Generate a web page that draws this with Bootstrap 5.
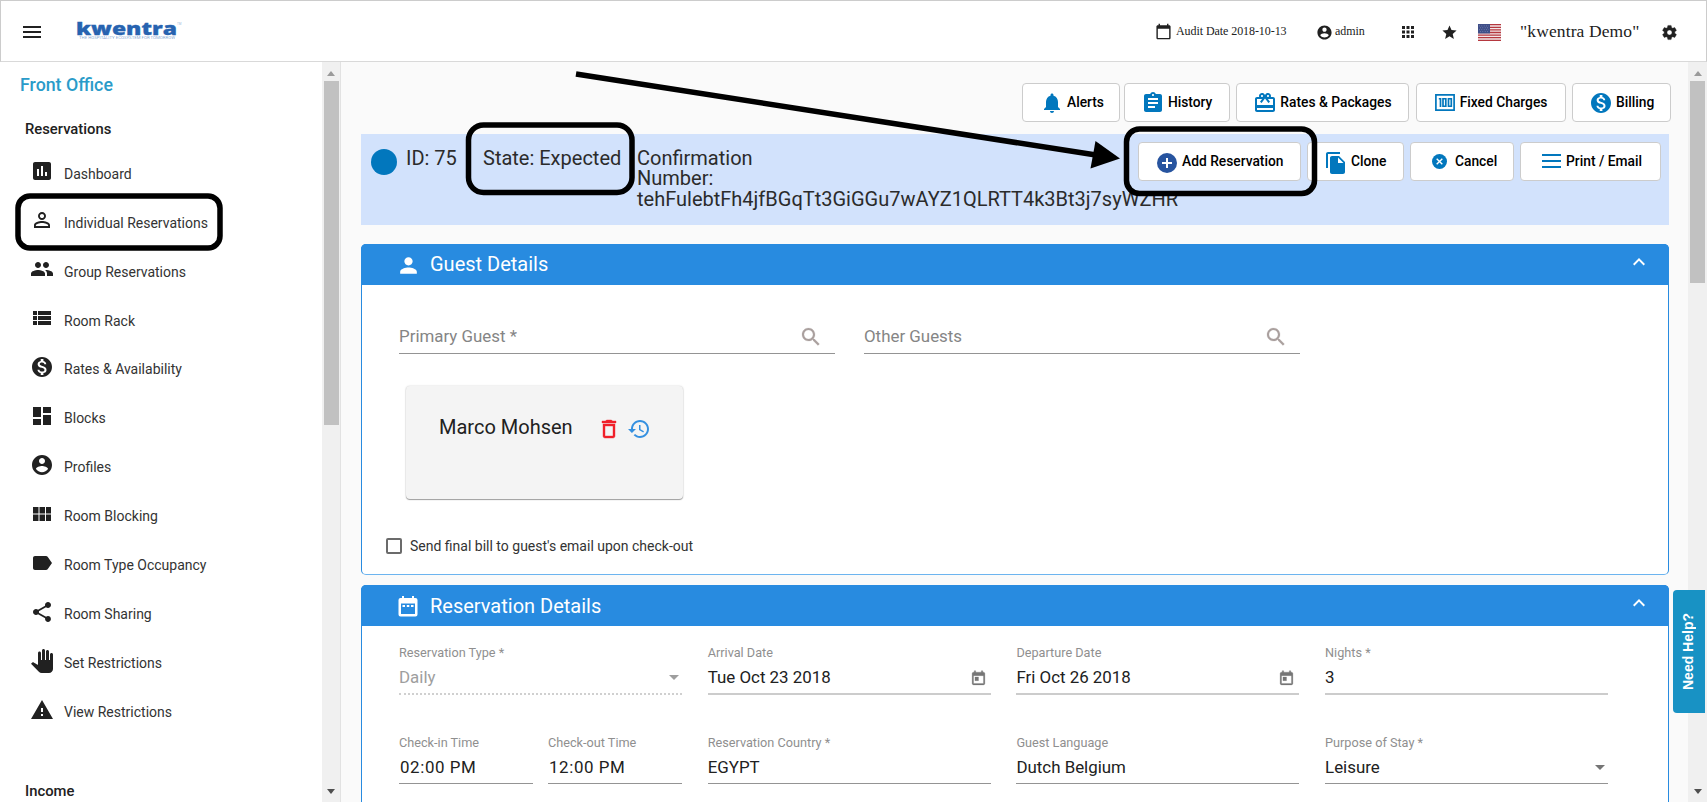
<!DOCTYPE html>
<html lang="en">
<head>
<meta charset="utf-8">
<title>kwentra</title>
<link href="https://cdn.jsdelivr.net/npm/bootstrap@5.3.0/dist/css/bootstrap.min.css" rel="stylesheet">
<script src="https://cdn.jsdelivr.net/npm/bootstrap@5.3.0/dist/js/bootstrap.bundle.min.js"></script>
<style>
body{width:1707px;height:802px;overflow:hidden;font-family:Roboto,sans-serif;color:#212121;background:#fff;line-height:1.25}
svg{display:block;flex:none;fill:currentColor}
span,h2,h3{white-space:nowrap}
.ic24{width:24px;height:24px}
.topbar{height:62px;border:1px solid #ccc;border-bottom:1px solid #d9d9d9;font-family:"Liberation Serif",serif;padding-left:19px}
.topbar .audit{font-size:12px;letter-spacing:-.07px}
.topbar .hotel{font-size:17.500px;letter-spacing:.12px}
.logo{color:#2763b0;margin-left:30px;margin-top:-4px}
.shell{height:740px}
.side{width:322px;padding-top:12px}
.side h2{font-size:17.800px;font-weight:500;color:#2a9bc9;margin:0;padding-left:20px;height:22px;line-height:22px}
.side h3{font-size:14.800px;font-weight:500;margin:0;padding-left:25px;height:20px;line-height:21px}
.side .entry{height:48.950px;padding-left:30px;font-size:14px;color:#333}
.side .entry svg{color:#212121;margin-right:10px;margin-top:-6px}
.rail{width:19px;background:#f0f0f0;padding:9px 0 8px}
.rail.inner{border-right:1px solid #e2e2e2}
.rail i{width:0;height:0;border:4px solid transparent}
.rail .up{border-top:0;border-bottom:5px solid #9a9a9a}
.rail .down{border-bottom:0;border-top:5px solid #4f4f4f}
.rail b{width:15px;background:#c1c1c1;margin-top:5px}
.page{background:#fafafa;width:1347px;padding:21px 17px 0 20px}
.tool{height:39px;border:1px solid #ccc;border-radius:4px;background:#fff;color:#000;font-size:13.800px;font-weight:500;padding:0}
.tool svg{color:#0277bd}
.statebar{height:91px;background:#d2e2fc;margin-top:12px;width:1308px;font-size:20px;line-height:20px;color:#2b2b2b;padding-left:10px}
.statebar .idno{width:77px;margin-left:9px}
.statebar>span,.statebar>.confirm{margin-top:14px}
.dot{width:26px;height:26px;background:#0277bd;margin-top:15px}
.panelx{width:1308px;border:1px solid #288be0;border-color:#288be0 #288be0 #6cb4ef;border-radius:5px;background:#fff}
.phead{height:41px;background:#288be0;color:#fff;padding:0 18px 0 36px;margin:-1px -1px 0;border-radius:5px 5px 0 0;font-size:20px}
.f{border-bottom:1px solid #949494;color:#212121;font-size:16.900px}
.f small{display:block;font-size:12.700px;color:#8f8f8f;line-height:16px;height:16px}
.f .v{height:32px;padding-top:1px;line-height:31px}
.f .v svg{color:#757575}
.f .clock{letter-spacing:.6px;padding-left:1px}
.fields{padding-left:37px;gap:25.700px}
.gcard{width:277px;height:113px;background:#f4f4f4;border-radius:4px;box-shadow:0 1px 1px rgba(0,0,0,.35),0 0 2px rgba(0,0,0,.2);font-size:20px}
.box{width:16px;height:16px;border:2px solid #6b6b6b;border-radius:2px}
.help{left:1673px;top:590px;width:32px;height:123px;background:#1892c4;border-radius:4px 0 0 4px;color:#fff;font:bold 14px "Liberation Sans",sans-serif;padding-right:2px}
.help span{writing-mode:vertical-rl;transform:rotate(180deg)}
</style>
</head>
<body class="position-relative">
<svg width="0" height="0" class="position-absolute"><defs>
<symbol id="money" viewBox="0 0 24 24"><path d="M12 2C6.48 2 2 6.48 2 12s4.48 10 10 10 10-4.480 10-10S17.520 2 12 2zm1.410 16.090V20h-2.670v-1.930c-1.710-.36-3.160-1.460-3.270-3.400h1.960c.1 1.050.82 1.870 2.650 1.870 1.960 0 2.400-.98 2.400-1.590 0-.83-.44-1.610-2.670-2.140-2.480-.6-4.180-1.620-4.180-3.670 0-1.720 1.390-2.840 3.110-3.210V4h2.670v1.950c1.860.45 2.790 1.860 2.850 3.390H14.300c-.05-1.110-.64-1.870-2.220-1.870-1.500 0-2.400.68-2.400 1.640 0 .84.65 1.390 2.670 1.910s4.180 1.390 4.180 3.910c-.01 1.830-1.380 2.830-3.120 3.160z"/></symbol>
<symbol id="acct" viewBox="0 0 24 24"><path d="M12 2C6.480 2 2 6.480 2 12s4.480 10 10 10 10-4.480 10-10S17.520 2 12 2zm0 3c1.660 0 3 1.340 3 3s-1.340 3-3 3-3-1.340-3-3 1.340-3 3-3zm0 14.200c-2.500 0-4.710-1.280-6-3.220.03-1.990 4-3.080 6-3.080 1.990 0 5.970 1.090 6 3.080-1.290 1.940-3.500 3.220-6 3.220z"/></symbol>
<symbol id="find" viewBox="0 0 24 24"><path d="M15.500 14h-.79l-.28-.27C15.410 12.590 16 11.110 16 9.500 16 5.910 13.090 3 9.500 3S3 5.910 3 9.500 5.910 16 9.500 16c1.610 0 3.090-.59 4.230-1.570l.27.28v.79l5 4.990L20.490 19l-4.990-5zm-6 0C7.010 14 5 11.990 5 9.500S7.010 5 9.500 5 14 7.010 14 9.500 11.990 14 9.500 14z" stroke="currentColor" stroke-width=".2"/></symbol>
<symbol id="today" viewBox="0 0 24 24"><path d="M19 3h-1V1h-2v2H8V1H6v2H5c-1.110 0-1.990.9-1.990 2L3 19c0 1.100.89 2 2 2h14c1.100 0 2-.9 2-2V5c0-1.100-.9-2-2-2zm0 16H5V8h14v11zM7 10h5v5H7z" stroke="currentColor" stroke-width=".4"/></symbol>
<symbol id="drop" viewBox="0 0 10 5"><path d="M0 0h10L5 5z"/></symbol>
<symbol id="chev" viewBox="0 0 24 24"><path d="M12 8l-6 6 1.410 1.410L12 10.830l4.590 4.580L18 14z"/></symbol>
</defs></svg>

<header class="topbar d-flex align-items-center">
<svg class="ic24" viewBox="0 0 24 24" style="margin-top:2px"><path d="M3 18h18v-2H3v2zm0-5h18v-2H3v2zm0-7v2h18V6H3z"/></svg>
<svg class="logo" width="108" height="30" viewBox="0 0 108 30"><text x="2" y="20.500" font-family="Open Sans,sans-serif" font-weight="800" font-size="17" textLength="101" lengthAdjust="spacingAndGlyphs" stroke="#2763b0" stroke-width=".3">kwentra</text><text x="103" y="10.500" font-family="Roboto" font-size="3" fill-opacity=".5">TM</text><text x="5" y="24.500" font-family="Roboto" font-size="3" textLength="96" lengthAdjust="spacingAndGlyphs" fill-opacity=".6">THE HOSPITALITY ECOSYSTEM FOR TOMORROW</text></svg>
<div class="d-flex align-items-center" style="margin-left:973px">
<svg width="17" height="17" viewBox="0 0 24 24"><path d="M20 3h-1V1h-2v2H7V1H5v2H4c-1.100 0-2 .9-2 2v16c0 1.100.9 2 2 2h16c1.100 0 2-.9 2-2V5c0-1.100-.9-2-2-2zm0 18H4V8h16v13z"/></svg>
<span class="audit" style="margin-left:4px;width:140px">Audit Date 2018-10-13</span>
<svg width="17" height="17" style="margin-top:2px"><use href="#acct"/></svg>
<span class="audit" style="margin-left:2px;width:64px">admin</span>
<svg width="18" height="18" viewBox="0 0 24 24" style="margin-top:2px"><path d="M4 8h4V4H4v4zm6 12h4v-4h-4v4zm-6 0h4v-4H4v4zm0-6h4v-4H4v4zm6 0h4v-4h-4v4zm6-10v4h4V4h-4zm-6 4h4V4h-4v4zm6 6h4v-4h-4v4zm0 6h4v-4h-4v4z"/></svg>
<svg width="17" height="17" viewBox="0 0 24 24" style="margin-left:24px;margin-top:2px"><path d="M12 17.270L18.180 21l-1.640-7.030L22 9.240l-7.190-.61L12 2 9.190 8.630 2 9.240l5.460 4.730L5.820 21z"/></svg>
<svg width="23" height="17" viewBox="0 0 23 18" preserveAspectRatio="none" style="margin-left:20px;margin-top:2px"><path fill="#f3e6e8" d="M0 0h23v18H0z"/><path stroke="#b5383f" stroke-width="1.400" d="M0 .7h23M0 3.500h23M0 6.300h23M0 9h23M0 11.700h23M0 14.500h23M0 17.300h23"/><path fill="#3f4f88" d="M0 0h12v10H0z"/><path stroke="#8f9ac4" stroke-width=".7" stroke-dasharray=".8 1.600" d="M1 2h10M2 4h9M1 6h10M2 8h9"/></svg>
<span class="hotel" style="margin-left:19px;width:141px;padding-top:1px">"kwentra Demo"</span>
<svg width="17" height="17" viewBox="0 0 24 24" style="margin-top:3px"><path d="M19.430 12.980c.04-.32.07-.64.07-.98s-.03-.66-.07-.98l2.110-1.650c.19-.15.240-.42.12-.64l-2-3.460c-.12-.22-.39-.3-.61-.22l-2.490 1c-.52-.4-1.080-.73-1.690-.98l-.38-2.650C14.460 2.180 14.250 2 14 2h-4c-.25 0-.46.18-.49.42l-.38 2.650c-.61.25-1.170.59-1.690.98l-2.490-1c-.23-.09-.49 0-.61.22l-2 3.460c-.13.22-.07.49.12.64l2.110 1.650c-.04.32-.07.65-.07.98s.03.66.07.98l-2.110 1.650c-.19.15-.240.42-.12.64l2 3.460c.12.22.39.3.61.22l2.490-1c.52.4 1.080.73 1.690.98l.38 2.650c.03.24.24.42.49.42h4c.25 0 .46-.18.49-.42l.38-2.650c.61-.25 1.170-.59 1.690-.98l2.490 1c.23.09.49 0 .61-.22l2-3.460c.12-.22.07-.49-.12-.64l-2.110-1.650zM12 15.500c-1.930 0-3.500-1.570-3.500-3.500s1.570-3.500 3.500-3.500 3.500 1.570 3.500 3.500-1.570 3.500-3.500 3.500z" stroke="currentColor" stroke-width=".5"/></svg>
</div>
</header>

<div class="shell d-flex">
<aside class="side overflow-hidden">
<h2><span>Front Office</span></h2>
<h3 style="margin-top:23px"><span>Reservations</span></h3>
<nav class="d-flex flex-column" style="margin-top:11px">
<div class="entry d-flex align-items-center"><svg class="ic24" viewBox="0 0 24 24"><path d="M19 3H5c-1.100 0-2 .9-2 2v14c0 1.100.9 2 2 2h14c1.100 0 2-.9 2-2V5c0-1.100-.9-2-2-2zM9 17H7v-7h2v7zm4 0h-2V7h2v10zm4 0h-2v-4h2v4z"/></svg><span>Dashboard</span></div>
<div class="entry d-flex align-items-center"><svg class="ic24" viewBox="0 0 24 24"><path d="M12 5.900c1.160 0 2.100.94 2.100 2.100s-.94 2.100-2.100 2.100S9.900 9.160 9.900 8s.94-2.100 2.100-2.100m0 9c2.970 0 6.100 1.460 6.100 2.100v1.100H5.900V17c0-.64 3.130-2.100 6.100-2.100M12 4C9.790 4 8 5.790 8 8s1.790 4 4 4 4-1.790 4-4-1.790-4-4-4zm0 9c-2.670 0-8 1.340-8 4v3h16v-3c0-2.660-5.330-4-8-4z"/></svg><span>Individual Reservations</span></div>
<div class="entry d-flex align-items-center"><svg class="ic24" viewBox="0 0 24 24"><path d="M16 11c1.660 0 2.990-1.340 2.990-3S17.660 5 16 5c-1.660 0-3 1.340-3 3s1.340 3 3 3zm-8 0c1.660 0 2.990-1.340 2.990-3S9.660 5 8 5C6.340 5 5 6.340 5 8s1.340 3 3 3zm0 2c-2.330 0-7 1.170-7 3.500V19h14v-2.500c0-2.330-4.670-3.500-7-3.500zm8 0c-.29 0-.62.02-.97.05 1.160.84 1.970 1.970 1.970 3.450V19h6v-2.500c0-2.330-4.670-3.500-7-3.500z"/></svg><span>Group Reservations</span></div>
<div class="entry d-flex align-items-center"><svg class="ic24" viewBox="0 0 24 24"><path d="M3 14h4v-4H3v4zm0 5h4v-4H3v4zM3 9h4V5H3v4zm5 5h13v-4H8v4zm0 5h13v-4H8v4zM8 5v4h13V5H8z"/></svg><span>Room Rack</span></div>
<div class="entry d-flex align-items-center"><svg class="ic24"><use href="#money"/></svg><span>Rates &amp; Availability</span></div>
<div class="entry d-flex align-items-center"><svg class="ic24" viewBox="0 0 24 24"><path d="M3 13h8V3H3v10zm0 8h8v-6H3v6zm10 0h8V11h-8v10zm0-18v6h8V3h-8z"/></svg><span>Blocks</span></div>
<div class="entry d-flex align-items-center"><svg class="ic24"><use href="#acct"/></svg><span>Profiles</span></div>
<div class="entry d-flex align-items-center"><svg class="ic24" viewBox="0 0 24 24"><path d="M3 11.500h5.500V5H3v6.500zM3 19h5.500v-6.500H3V19zm6.500 0H15v-6.500H9.500V19zm6.500 0h5v-6.500h-5V19zM9.500 11.500H15V5H9.500v6.500zM16 5v6.500h5V5h-5z"/></svg><span>Room Blocking</span></div>
<div class="entry d-flex align-items-center"><svg class="ic24" viewBox="0 0 24 24"><path d="M17.630 5.840C17.270 5.330 16.670 5 16 5L5 5.010C3.900 5.010 3 5.900 3 7v10c0 1.100.9 1.990 2 1.990L16 19c.67 0 1.270-.33 1.630-.84L22 12l-4.370-6.160z"/></svg><span>Room Type Occupancy</span></div>
<div class="entry d-flex align-items-center"><svg class="ic24" viewBox="0 0 24 24"><path d="M18 16.080c-.76 0-1.440.3-1.960.77L8.910 12.700c.05-.23.09-.46.09-.7s-.04-.47-.09-.7l7.050-4.110c.54.5 1.250.81 2.040.81 1.660 0 3-1.340 3-3s-1.340-3-3-3-3 1.340-3 3c0 .24.04.47.09.7L8.040 9.810C7.500 9.310 6.790 9 6 9c-1.660 0-3 1.340-3 3s1.340 3 3 3c.79 0 1.500-.31 2.040-.81l7.120 4.160c-.05.21-.08.43-.08.65 0 1.610 1.310 2.920 2.920 2.920s2.920-1.310 2.920-2.920-1.310-2.920-2.920-2.920z"/></svg><span>Room Sharing</span></div>
<div class="entry d-flex align-items-center"><svg class="ic24" viewBox="0 0 24 24"><path d="M23 5.500V20c0 2.200-1.800 4-4 4h-7.300c-1.080 0-2.100-.43-2.850-1.190L1 14.830s1.260-1.230 1.300-1.250c.22-.19.49-.29.79-.29.22 0 .42.06.6.16.04.01 4.310 2.460 4.310 2.460V4c0-.83.67-1.500 1.500-1.500S11 3.170 11 4v7h1V1.500c0-.83.67-1.500 1.500-1.500S15 .67 15 1.500V11h1V2.500c0-.83.67-1.500 1.500-1.500s1.500.67 1.500 1.500V11h1V5.500c0-.83.67-1.500 1.500-1.500s1.500.67 1.500 1.500z"/></svg><span>Set Restrictions</span></div>
<div class="entry d-flex align-items-center"><svg class="ic24" viewBox="0 0 24 24"><path d="M1 21h22L12 2 1 21zm12-3h-2v-2h2v2zm0-4h-2v-4h2v4z"/></svg><span>View Restrictions</span></div>
</nav>
<h3 style="margin-top:43.500px"><span>Income</span></h3>
</aside>
<div class="rail inner d-flex flex-column align-items-center"><i class="up"></i><b style="height:344px"></b><i class="down mt-auto"></i></div>

<main class="page overflow-hidden">
<div class="d-flex" style="margin-left:661px">
<button class="tool btn d-flex align-items-center" style="width:98px;padding-left:17px"><svg class="ic24" viewBox="0 0 24 24"><path d="M12 22c1.100 0 2-.9 2-2h-4c0 1.100.89 2 2 2zm6-6v-5c0-3.070-1.640-5.640-4.500-6.320V4c0-.83-.67-1.500-1.500-1.500s-1.500.67-1.500 1.500v.68C7.630 5.360 6 7.920 6 11v5l-2 2v1h16v-1l-2-2z"/></svg><span style="margin-left:3px">Alerts</span></button>
<button class="tool btn d-flex align-items-center" style="width:106px;margin-left:4px;padding-left:16px"><svg class="ic24" viewBox="0 0 24 24"><path d="M19 3h-4.180C14.400 1.840 13.300 1 12 1c-1.300 0-2.400.84-2.820 2H5c-1.100 0-2 .9-2 2v14c0 1.100.9 2 2 2h14c1.100 0 2-.9 2-2V5c0-1.100-.9-2-2-2zm-7 0c.55 0 1 .45 1 1s-.45 1-1 1-1-.45-1-1 .45-1 1-1zm2 14H7v-2h7v2zm3-4H7v-2h10v2zm0-4H7V7h10v2z"/></svg><span style="margin-left:3px">History</span></button>
<button class="tool btn d-flex align-items-center" style="width:173px;margin-left:6.500px;padding-left:16px"><svg class="ic24" viewBox="0 0 24 24"><path d="M20 6h-2.180c.11-.31.18-.65.18-1 0-1.660-1.340-3-3-3-1.050 0-1.960.54-2.500 1.350l-.5.670-.5-.68C10.960 2.540 10.050 2 9 2 7.340 2 6 3.340 6 5c0 .35.07.69.18 1H4c-1.110 0-1.990.89-1.990 2L2 19c0 1.110.89 2 2 2h16c1.110 0 2-.89 2-2V8c0-1.110-.89-2-2-2zm-5-2c.55 0 1 .45 1 1s-.45 1-1 1-1-.45-1-1 .45-1 1-1zM9 4c.55 0 1 .45 1 1s-.45 1-1 1-1-.45-1-1 .45-1 1-1zm11 15H4v-2h16v2zm0-5H4V8h5.080L7 10.830 8.620 12 11 8.760l1-1.360 1 1.360L15.380 12 17 10.830 14.920 8H20v6z"/></svg><span style="margin-left:3px">Rates &amp; Packages</span></button>
<button class="tool btn d-flex align-items-center" style="width:150px;margin-left:6.500px;padding-left:18px"><svg width="20" height="17" viewBox="0 0 20 18" preserveAspectRatio="none"><path fill="none" stroke="currentColor" stroke-width="1.700" d="M.9.9h18.200v16.200H.9zM3.800 5h1.700v8.800M8 5h2.800v8H8zM13.500 5h2.800v8h-2.800z"/></svg><span style="margin-left:5px">Fixed Charges</span></button>
<button class="tool btn d-flex align-items-center" style="width:99px;margin-left:6.500px;padding-left:16px"><svg class="ic24"><use href="#money"/></svg><span style="margin-left:3px">Billing</span></button>
</div>

<section class="statebar d-flex">
<div class="dot rounded-circle"></div>
<span class="idno">ID: 75</span>
<span style="width:154px">State: Expected</span>
<div class="confirm d-flex flex-column" style="width:501px;gap:.4px"><span>Confirmation</span><span>Number:</span><span>tehFulebtFh4jfBGqTt3GiGGu7wAYZ1QLRTT4k3Bt3j7syWZHR</span></div>
<div class="d-flex" style="margin-top:8px">
<button class="tool btn d-flex align-items-center" style="width:163px;padding-left:18px"><svg width="20" height="20" viewBox="0 0 20 20" style="margin-top:2px"><circle cx="10" cy="10" r="10" fill="#27549f"/><path d="M10 5v10M5 10h10" stroke="#fff" stroke-width="2"/></svg><span style="margin-left:5px">Add Reservation</span></button>
<button class="tool btn d-flex align-items-center" style="width:97px;margin-left:6px;padding-left:16px"><svg class="ic24" viewBox="0 0 24 24" style="margin-top:3px"><path d="M16 1H4c-1.100 0-2 .9-2 2v14h2V3h12V1zm-1 4l6 6v10c0 1.100-.9 2-2 2H7.990C6.890 23 6 22.100 6 21l.01-14c0-1.100.89-2 1.990-2h7zm-1 7h5.500L14 6.500V12z"/></svg><span style="margin-left:3px">Clone</span></button>
<button class="tool btn d-flex align-items-center" style="width:104px;margin-left:6px;padding-left:21px"><svg width="15" height="15" viewBox="0 0 16 16"><circle cx="8" cy="8" r="8"/><path d="M5 5l6 6M11 5l-6 6" stroke="#fff" stroke-width="1.500"/></svg><span style="margin-left:8px">Cancel</span></button>
<button class="tool btn d-flex align-items-center" style="width:141px;margin-left:6px;padding-left:21px"><svg width="19" height="14" viewBox="0 0 19 14" style="margin-top:-2px"><path d="M0 0h19v2H0zM0 6h19v2H0zM0 12h19v2H0z"/></svg><span style="margin-left:5px">Print / Email</span></button>
</div>
</section>

<section class="panelx" style="margin-top:19px;height:331px">
<div class="phead d-flex align-items-center"><svg width="25" height="25" viewBox="0 0 24 24" style="margin:1px 0 0 -1px"><path d="M12 12c2.210 0 4-1.790 4-4s-1.790-4-4-4-4 1.790-4 4 1.790 4 4 4zm0 2c-2.670 0-8 1.340-8 4v2h16v-2c0-2.660-5.330-4-8-4z"/></svg><span style="margin-left:9px">Guest Details</span><svg class="ms-auto" width="24" height="24" style="margin-top:-6px"><use href="#chev"/></svg></div>
<div class="d-flex" style="padding-left:37px;gap:29px;margin-top:36px">
<div class="f d-flex align-items-center" style="width:436px;height:33px;color:#858585;padding-right:12px"><span>Primary Guest *</span><svg class="ic24 ms-auto" style="color:#aaa09e"><use href="#find"/></svg></div>
<div class="f d-flex align-items-center" style="width:436px;height:33px;color:#858585;padding-right:12px"><span>Other Guests</span><svg class="ic24 ms-auto" style="color:#aaa09e"><use href="#find"/></svg></div>
</div>
<div class="gcard d-flex" style="margin:32px 0 0 44px;padding:29px 0 0 33px"><span style="width:158px">Marco Mohsen</span><svg width="24" height="24" viewBox="0 0 24 24" style="color:#f0202a;margin-top:2px"><path d="M6 19c0 1.100.9 2 2 2h8c1.100 0 2-.9 2-2V7H6v12zM8 9h8v10H8V9zm7.500-5l-1-1h-5l-1 1H5v2h14V4z" stroke="currentColor" stroke-width=".4"/></svg><svg width="24" height="24" viewBox="0 0 24 24" style="color:#3590e0;margin:2px 0 0 6px"><path d="M13 3c-4.970 0-9 4.030-9 9H1l3.890 3.890.07.14L9 12H6c0-3.870 3.130-7 7-7s7 3.130 7 7-3.130 7-7 7c-1.930 0-3.680-.79-4.940-2.060l-1.420 1.420C8.270 19.990 10.510 21 13 21c4.970 0 9-4.030 9-9s-4.030-9-9-9zm-1 5v5l4.280 2.540.72-1.210-3.500-2.080V8H12z"/></svg></div>
<div class="d-flex align-items-center" style="margin:38px 0 0 24px;font-size:14px;color:#333"><div class="box"></div><span style="margin-left:8px;padding-top:1px">Send final bill to guest's email upon check-out</span></div>
</section>

<section class="panelx" style="margin-top:10px;height:260px">
<div class="phead d-flex align-items-center"><svg width="24" height="24" viewBox="0 0 24 24" style="margin-left:-1px"><path d="M19 4h-1V2h-2v2H8V2H6v2H4.500Q2.500 4 2.500 6v14.500q0 2 2 2h15q2 0 2-2V6q0-2-2-2zM5 9.500h14v10.500H5zM6.500 11h2.500v2H6.500zM10.800 11h2.500v2h-2.500zM15 11h2.500v2H15z" fill-rule="evenodd"/></svg><span style="margin-left:10px;padding-top:1px">Reservation Details</span><svg class="ms-auto" width="24" height="24" style="margin-top:-5px"><use href="#chev"/></svg></div>
<div class="d-flex fields" style="margin-top:19px">
<div class="f" style="width:283px;border-bottom:2px dotted #d0d0d0;color:#9e9e9e"><small><span>Reservation Type *</span></small><div class="v d-flex align-items-center"><span>Daily</span><svg width="10" height="5" class="ms-auto" style="margin-right:3px;color:#9e9e9e"><use href="#drop"/></svg></div></div>
<div class="f" style="width:283px;border-bottom:2px solid #ccc"><small><span>Arrival Date</span></small><div class="v d-flex align-items-center"><span>Tue Oct 23 2018</span><svg width="17" height="17" class="ms-auto" style="margin:2px 4px 0 0"><use href="#today"/></svg></div></div>
<div class="f" style="width:283px;border-bottom:2px solid #ccc"><small><span>Departure Date</span></small><div class="v d-flex align-items-center"><span>Fri Oct 26 2018</span><svg width="17" height="17" class="ms-auto" style="margin:2px 4px 0 0"><use href="#today"/></svg></div></div>
<div class="f" style="width:283px;border-bottom:2px solid #ccc"><small><span>Nights *</span></small><div class="v"><span>3</span></div></div>
</div>
<div class="d-flex fields" style="margin-top:40px">
<div class="d-flex" style="width:283px;gap:15px">
<div class="f" style="width:134px"><small><span>Check-in Time</span></small><div class="v"><span class="clock">02:00 PM</span></div></div>
<div class="f" style="width:134px"><small><span>Check-out Time</span></small><div class="v"><span class="clock">12:00 PM</span></div></div>
</div>
<div class="f" style="width:283px"><small><span>Reservation Country *</span></small><div class="v"><span>EGYPT</span></div></div>
<div class="f" style="width:283px"><small><span>Guest Language</span></small><div class="v"><span>Dutch Belgium</span></div></div>
<div class="f" style="width:283px"><small><span>Purpose of Stay *</span></small><div class="v d-flex align-items-center"><span>Leisure</span><svg width="10" height="5" class="ms-auto" style="margin-right:3px"><use href="#drop"/></svg></div></div>
</div>
</section>
</main>
<div class="rail d-flex flex-column align-items-center"><i class="up"></i><b style="height:202px"></b><i class="down mt-auto"></i></div>
</div>

<div class="help position-absolute d-flex align-items-center justify-content-center"><span>Need Help?</span></div>

<svg class="position-absolute top-0 start-0 pe-none" width="1707" height="802" stroke="#000" stroke-width="5.500" style="fill:none">
<rect x="18" y="196" width="202" height="52" rx="12"/>
<rect x="468.500" y="125" width="163.500" height="67.500" rx="15"/>
<rect x="1126.500" y="129" width="188" height="64.500" rx="13"/>
<path d="M576 74L1096 155"/><path d="M1095.500 141L1120 158.500L1090.500 168.500z" fill="#000" stroke="none"/>
</svg>
</body>
</html>
